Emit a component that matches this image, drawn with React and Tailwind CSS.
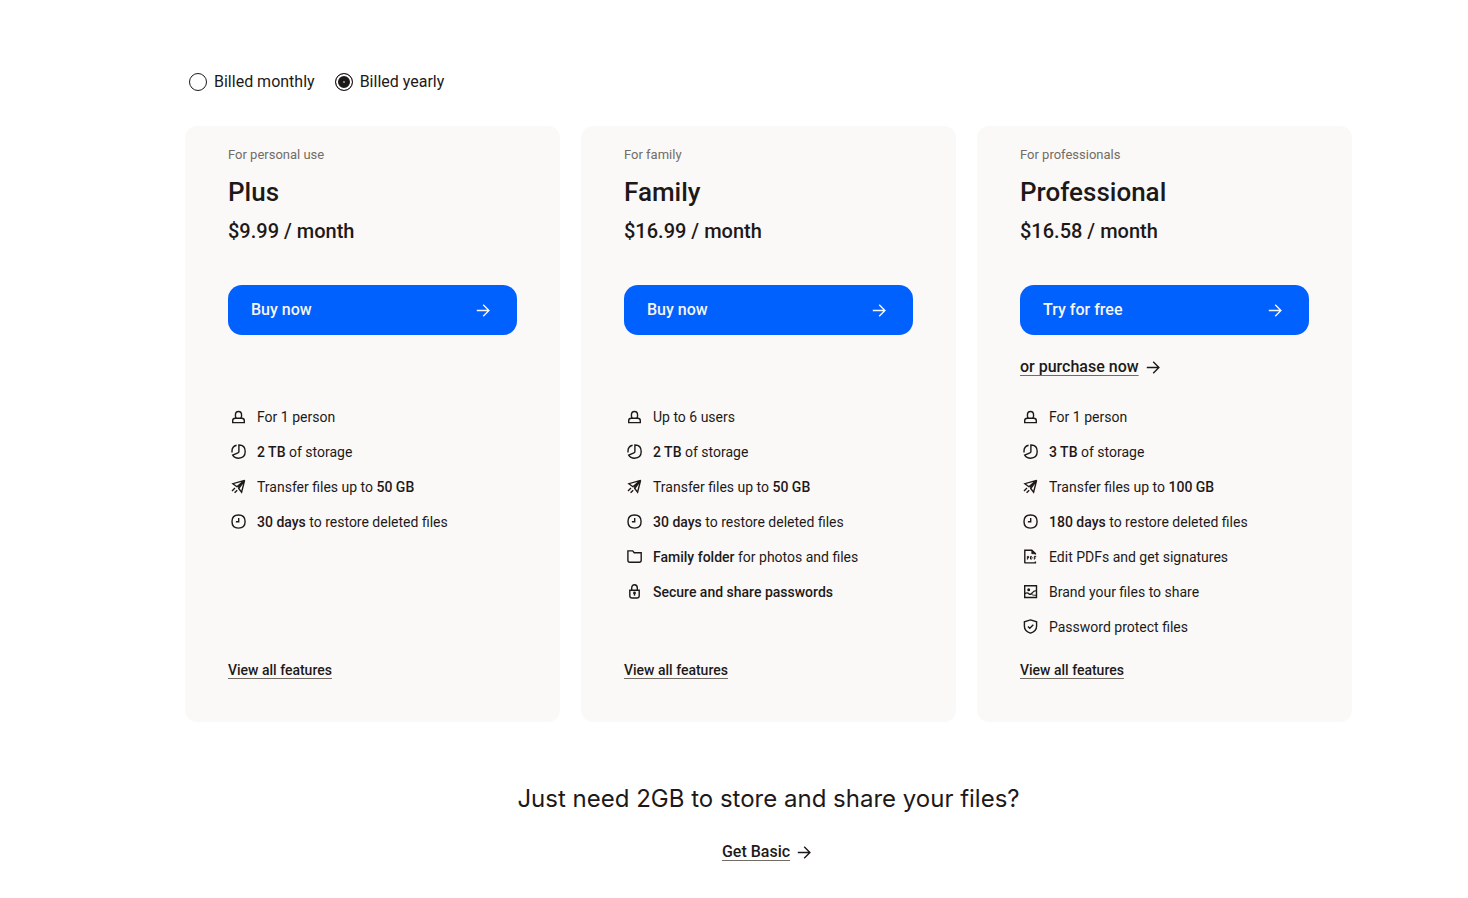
import { useState } from "react";

const ICONS = {
  person: (
    <>
      <path d="M4.700 16.600v-1.900c0-1.500 1-2.400 2.500-2.400h6.600c1.500 0 2.500.9 2.500 2.400v1.900z" />
      <path d="M8.200 12.300c-.6-.9-.8-1.900-.8-3.100 0-2.300 1.100-3.700 3.100-3.700s3.100 1.400 3.100 3.700c0 1.200-.2 2.200-.8 3.100" />
    </>
  ),
  storage: (
    <>
      <path d="M10.900 4v6.400c0 .8-.3 1.200-1 1.500l-5.200 2.200c1.200 2.100 3.200 3.100 5.800 3.100 4.300 0 6.700-2.500 6.700-6.600S14.900 4 10.900 4z" />
      <path d="M8.600 4.200C5.600 4.800 4 7 4 10.100v1.300" />
    </>
  ),
  transfer: (
    <>
      <path d="M16.600 4.400L4.900 7.700l4 3zM16.600 4.400l-3 11.800-2.900-3.700z" />
      <path d="M16.600 4.400l-6.800 7.100M7 12.100l-3 3M9.200 14.200l-2.600 2.600" />
    </>
  ),
  clock: (
    <>
      <path d="M10.500 4c4.500 0 6.600 2.100 6.600 6.500s-2.100 6.600-6.600 6.600S4 15 4 10.500 6 4 10.500 4z" />
      <path d="M10.700 7v3.700H7.900" />
    </>
  ),
  folder: <path d="M3.900 4.900h4.800l1.500 1.800h7v7.600c0 1.400-.6 2-2 2H5.900c-1.400 0-2-.6-2-2z" />,
  lock: (
    <>
      <path d="M5.800 9.300h9.400v5.400c0 1.600-.7 2.300-2.300 2.300H8.100c-1.600 0-2.300-.7-2.300-2.300z" />
      <path d="M7.700 9.200V7.100c0-2 1-3.300 2.800-3.300s2.800 1.300 2.800 3.300v2.100" />
      <path d="M10.500 12.300v2.400" />
      <circle cx="10.500" cy="12" r="0.700" fill="currentColor" />
    </>
  ),
  pdf: (
    <>
      <path d="M4.800 17.200V4.300h7l3.600 3.300v1M4.800 16.900h10.600v-1.500" />
      <path d="M11.800 4.300v3.400h3.600z" fill="currentColor" strokeWidth="0.800" />
      <path
        strokeWidth="1"
        d="M7.400 13.600v-3.200h1.200v1.600H7.400M10.500 10.400v2.700h.9l.6-.6v-1.500l-.6-.6zM14.300 13.600v-3.200h1.900M14.300 12h1.500"
      />
    </>
  ),
  image: (
    <>
      <path d="M4.700 4.700h11.800v11.800H4.700z" />
      <path d="M4.900 12.600c1.500-1 2.700-1 3.800 0 1.300 1.100 2.400.9 3.400-.6 1-1.600 2.200-2.400 4.300-2.400" />
      <path d="M11.600 13.300c1.200.9 2.600 1.100 4.600.9" strokeWidth="1" />
      <circle cx="8.700" cy="8.700" r="0.800" fill="currentColor" />
    </>
  ),
  shield: (
    <>
      <path d="M10.500 3.900l6.100 1.900v4.400c0 3.300-2.200 5.600-6.100 7-3.900-1.400-6.100-3.700-6.100-7V5.800z" />
      <path d="M7.900 10.400l1.900 1.900 3.500-3.600" />
    </>
  ),
  arrow: <path d="M3.800 10.500h12M10.200 4.700l5.700 5.800-5.700 5.800" />,
};

function Icon({ name }) {
  return (
    <svg
      viewBox="0 0 21 21"
      className="size-[21px] shrink-0"
      fill="none"
      stroke="currentColor"
      strokeWidth="1.400"
      aria-hidden="true"
    >
      {ICONS[name]}
    </svg>
  );
}

const plans = [
  {
    audience: "For personal use",
    name: "Plus",
    price: "$9.99 / month",
    cta: "Buy now",
    features: [
      { icon: "person", text: "For 1 person" },
      { icon: "storage", bold: "2 TB", text: " of storage" },
      { icon: "transfer", text: "Transfer files up to ", boldAfter: "50 GB" },
      { icon: "clock", bold: "30 days", text: " to restore deleted files" },
    ],
  },
  {
    audience: "For family",
    name: "Family",
    price: "$16.99 / month",
    cta: "Buy now",
    features: [
      { icon: "person", text: "Up to 6 users" },
      { icon: "storage", bold: "2 TB", text: " of storage" },
      { icon: "transfer", text: "Transfer files up to ", boldAfter: "50 GB" },
      { icon: "clock", bold: "30 days", text: " to restore deleted files" },
      { icon: "folder", bold: "Family folder", text: " for photos and files" },
      { icon: "lock", bold: "Secure and share passwords" },
    ],
  },
  {
    audience: "For professionals",
    name: "Professional",
    price: "$16.58 / month",
    cta: "Try for free",
    secondary: "or purchase now",
    features: [
      { icon: "person", text: "For 1 person" },
      { icon: "storage", bold: "3 TB", text: " of storage" },
      { icon: "transfer", text: "Transfer files up to ", boldAfter: "100 GB" },
      { icon: "clock", bold: "180 days", text: " to restore deleted files" },
      { icon: "pdf", text: "Edit PDFs and get signatures" },
      { icon: "image", text: "Brand your files to share" },
      { icon: "shield", text: "Password protect files" },
    ],
  },
];

function ArrowLink({ children }) {
  return (
    <a href="#" className="inline-flex h-6 items-center gap-1 text-base font-medium">
      <span className="underline decoration-[#736c64] decoration-1 underline-offset-3">
        {children}
      </span>
      <Icon name="arrow" />
    </a>
  );
}

function BillingOption({ value, label, selected, onSelect }) {
  return (
    <label className="flex h-6 items-center gap-[7px] text-base">
      <input
        type="radio"
        name="billing"
        value={value}
        checked={selected}
        onChange={() => onSelect(value)}
        className="size-[18px] appearance-none rounded-full border border-[#1e1919] bg-white checked:bg-[#1e1919] checked:bg-[radial-gradient(circle,#857f7f_1px,#1e1919_1px)] checked:shadow-[inset_0_0_0_2px_#fff]"
      />
      {label}
    </label>
  );
}

function PlanCard({ plan }) {
  return (
    <section className="flex flex-1 flex-col rounded-xl bg-[#faf9f8] px-[43px] pt-[19px] pb-[42px]">
      <p className="text-[13px] leading-5 text-[#736c64]">{plan.audience}</p>
      <h2 className="mt-[11px] text-[26px] leading-8 font-medium">{plan.name}</h2>
      <p className="mt-[11px] text-xl leading-6 font-medium">{plan.price}</p>

      <button
        type="button"
        className="mt-[42px] flex h-[50px] items-center justify-between rounded-[14px] bg-[#0061fe] px-[23px] text-base font-medium text-[#f7f5f2]"
      >
        {plan.cta}
        <Icon name="arrow" />
      </button>

      <div className="mt-5 h-6">
        {plan.secondary && <ArrowLink>{plan.secondary}</ArrowLink>}
      </div>

      <ul className="mt-5 mb-4 text-sm">
        {plan.features.map((f) => (
          <li key={f.icon} className="flex h-[35px] items-center gap-2">
            <Icon name={f.icon} />
            <span>
              {f.bold && <b className="font-medium">{f.bold}</b>}
              {f.text}
              {f.boldAfter && <b className="font-medium">{f.boldAfter}</b>}
            </span>
          </li>
        ))}
      </ul>

      <a
        href="#"
        className="mt-auto self-start text-sm leading-5 font-medium underline decoration-[#736c64] decoration-1 underline-offset-3"
      >
        View all features
      </a>
    </section>
  );
}

export default function App() {
  const [billing, setBilling] = useState("yearly");

  return (
    <main className="bg-white pt-[70px] pr-[116px] pb-8 pl-[185px] font-['Roboto','Liberation_Sans',sans-serif] text-[#1e1919]">
      <div className="flex gap-5 pl-1">
        <BillingOption
          value="monthly"
          label="Billed monthly"
          selected={billing === "monthly"}
          onSelect={setBilling}
        />
        <BillingOption
          value="yearly"
          label="Billed yearly"
          selected={billing === "yearly"}
          onSelect={setBilling}
        />
      </div>

      <div className="mt-8 flex gap-[21px]">
        {plans.map((plan) => (
          <PlanCard key={plan.name} plan={plan} />
        ))}
      </div>

      <div className="mt-[61px] text-center">
        <h2 className="mb-[25px] font-['Inter',sans-serif] text-2xl leading-8">
          Just need 2GB to store and share your files?
        </h2>
        <ArrowLink>Get Basic</ArrowLink>
      </div>
    </main>
  );
}
